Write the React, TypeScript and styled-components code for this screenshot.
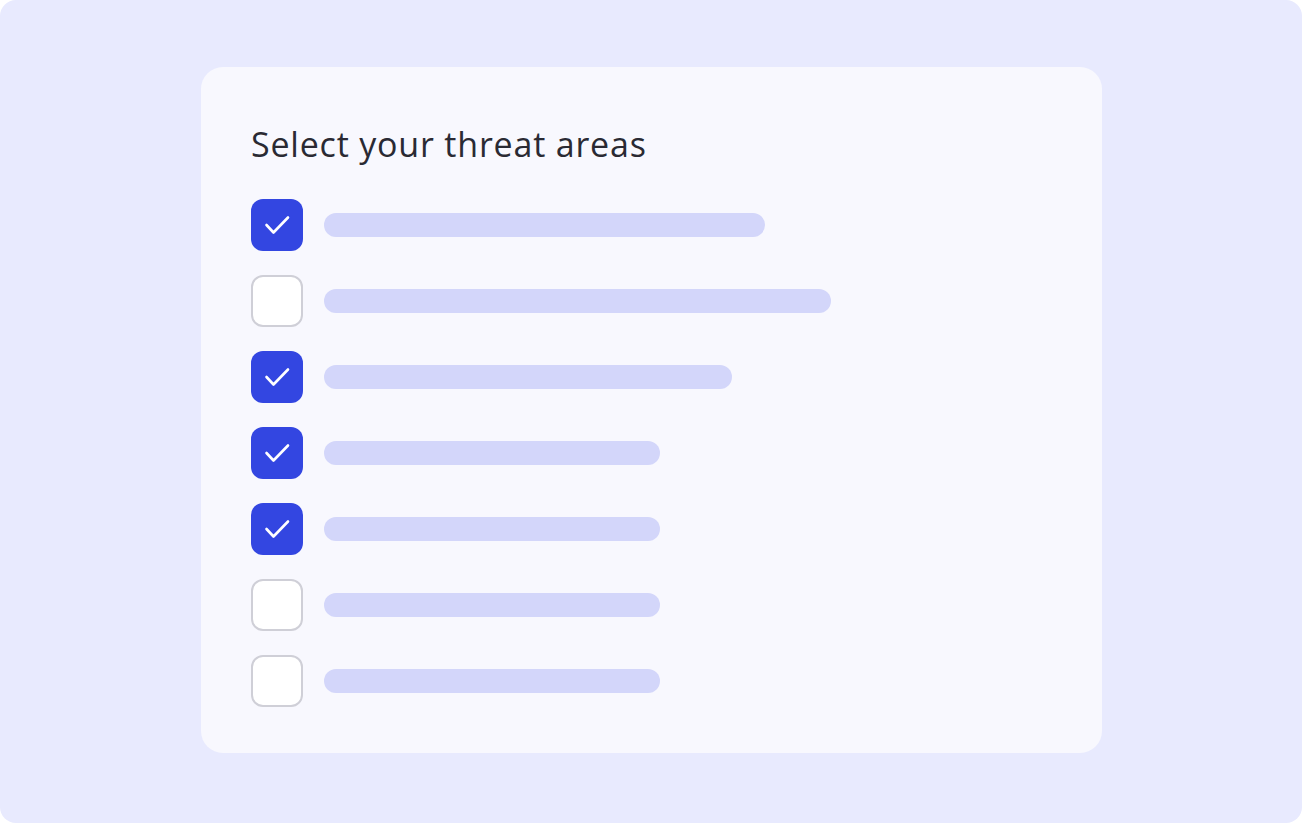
import React from "react";
import styled, { createGlobalStyle } from "styled-components";

const GlobalStyle = createGlobalStyle`
  html, body {
    margin: 0;
    padding: 0;
    background: #ffffff;
  }
  * {
    box-sizing: border-box;
  }
`;

const Page = styled.div`
  width: 1302px;
  height: 823px;
  background: #e8eafe;
  border-radius: 16px;
  padding: 67px 0 0 201px;
`;

const Card = styled.div`
  width: 901px;
  height: 686px;
  background: #f8f8fe;
  border-radius: 22px;
  padding: 57px 50px 0 50px;
`;

const Title = styled.h1`
  margin: 0 0 35px 0;
  font-family: "Open Sans", "Lato", sans-serif;
  font-weight: 400;
  font-size: 34px;
  line-height: 40px;
  color: #2a2a33;
  letter-spacing: 0.8px;
`;

const List = styled.div`
  display: flex;
  flex-direction: column;
  gap: 24px;
`;

const Row = styled.div`
  display: flex;
  align-items: center;
  gap: 21px;
  height: 52px;
`;

const Box = styled.div<{ $checked: boolean }>`
  width: 52px;
  height: 52px;
  flex: none;
  border-radius: 12px;
  display: flex;
  align-items: center;
  justify-content: center;
  background: ${({ $checked }) => ($checked ? "#3346e1" : "#ffffff")};
  border: ${({ $checked }) => ($checked ? "none" : "2px solid #cfcfd7")};
`;

const Bar = styled.div`
  height: 24px;
  border-radius: 12px;
  background: #d3d6fa;
`;

const items = [
  { checked: true, width: 441 },
  { checked: false, width: 507 },
  { checked: true, width: 408 },
  { checked: true, width: 336 },
  { checked: true, width: 336 },
  { checked: false, width: 336 },
  { checked: false, width: 336 },
];

const Check = () => (
  <svg width="52" height="52" viewBox="0 0 52 52" fill="none">
    <path
      d="M15.5 26 L22.5 33.5 L37 18.5"
      stroke="#ffffff"
      strokeWidth="2.6"
      strokeLinecap="round"
      strokeLinejoin="round"
    />
  </svg>
);

const App = () => {
  return (
    <>
      <GlobalStyle />
      <Page>
        <Card>
          <Title>Select your threat areas</Title>
          <List>
            {items.map((item, i) => (
              <Row key={i}>
                <Box $checked={item.checked}>{item.checked && <Check />}</Box>
                <Bar style={{ width: item.width }} />
              </Row>
            ))}
          </List>
        </Card>
      </Page>
    </>
  );
};

export default App;
